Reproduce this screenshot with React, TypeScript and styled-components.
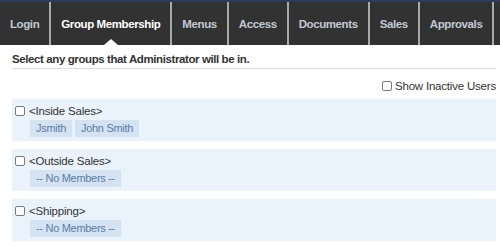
import React from "react";
import styled, { createGlobalStyle } from "styled-components";

const Global = createGlobalStyle`
  html, body { margin: 0; padding: 0; background: #fff; }
  body { font-family: "Liberation Sans", Arial, sans-serif; overflow: hidden; }
`;

const Page = styled.div`
  width: 500px;
  height: 246px;
  overflow: hidden;
`;

const NavBar = styled.nav`
  display: flex;
  height: 43px;
  background: #323232;
  border-top: 2px solid #2c3c59;
  overflow: hidden;
`;

const Tab = styled.div<{ $active?: boolean }>`
  position: relative;
  flex-shrink: 0;
  display: flex;
  align-items: center;
  padding: 0 10px;
  border-right: 2px solid #a9a9a9;
  font-size: 11.5px;
  letter-spacing: -0.4px;
  font-weight: bold;
  color: ${(p) => (p.$active ? "#ffffff" : "#c3c9d2")};
  white-space: nowrap;

  ${(p) =>
    p.$active &&
    `
    &::after {
      content: "";
      position: absolute;
      left: 50%;
      bottom: 0;
      margin-left: -7px;
      border-left: 7px solid transparent;
      border-right: 7px solid transparent;
      border-bottom: 6px solid #ffffff;
    }
  `}
`;

const Content = styled.div`
  padding: 0 4px 0 12px;
`;

const Heading = styled.div`
  padding: 8px 0 2px;
  line-height: 13px;
  font-size: 11.5px;
  letter-spacing: -0.4px;
  font-weight: bold;
  color: #333;
  border-bottom: 1px solid #dcdcdc;
`;

const OptionsRow = styled.label`
  display: flex;
  justify-content: flex-end;
  align-items: center;
  gap: 3px;
  height: 13px;
  margin: 10px 0 7px;
  font-size: 11.5px;
  letter-spacing: -0.2px;
  color: #333;
`;

const Check = styled.input.attrs({ type: "checkbox" })`
  appearance: none;
  -webkit-appearance: none;
  margin: 0;
  width: 10px;
  height: 10px;
  border: 1px solid #7a7a7a;
  border-radius: 2px;
  background: #fff;
  box-sizing: border-box;
  flex-shrink: 0;
`;

const GroupList = styled.div`
  display: flex;
  flex-direction: column;
  gap: 8px;
`;

const GroupBox = styled.div`
  background: #eaf2fc;
  padding: 5px 4px 4px 3px;
`;

const GroupLabel = styled.label`
  display: flex;
  align-items: center;
  gap: 4px;
  height: 13px;
  font-size: 11.5px;
  letter-spacing: -0.2px;
  color: #333;
`;

const Members = styled.div`
  display: flex;
  gap: 3px;
  margin: 3px 0 0 15px;
`;

const Chip = styled.span`
  height: 17px;
  line-height: 17px;
  padding: 0 6px;
  background: #d4e2f1;
  color: #5a7ea8;
  font-size: 11px;
  letter-spacing: -0.3px;
`;

const tabs = ["Login", "Group Membership", "Menus", "Access", "Documents", "Sales", "Approvals"];

const groups: { name: string; members: string[] }[] = [
  { name: "<Inside Sales>", members: ["Jsmith", "John Smith"] },
  { name: "<Outside Sales>", members: [] },
  { name: "<Shipping>", members: [] },
];

export default function App() {
  return (
    <Page>
      <Global />
      <NavBar>
        {tabs.map((t) => (
          <Tab key={t} $active={t === "Group Membership"}>
            {t}
          </Tab>
        ))}
      </NavBar>
      <Content>
        <Heading>Select any groups that Administrator will be in.</Heading>
        <OptionsRow>
          <Check />
          Show Inactive Users
        </OptionsRow>
        <GroupList>
          {groups.map((g) => (
            <GroupBox key={g.name}>
              <GroupLabel>
                <Check />
                {g.name}
              </GroupLabel>
              <Members>
                {g.members.length ? (
                  g.members.map((m) => <Chip key={m}>{m}</Chip>)
                ) : (
                  <Chip>-- No Members --</Chip>
                )}
              </Members>
            </GroupBox>
          ))}
        </GroupList>
      </Content>
    </Page>
  );
}
